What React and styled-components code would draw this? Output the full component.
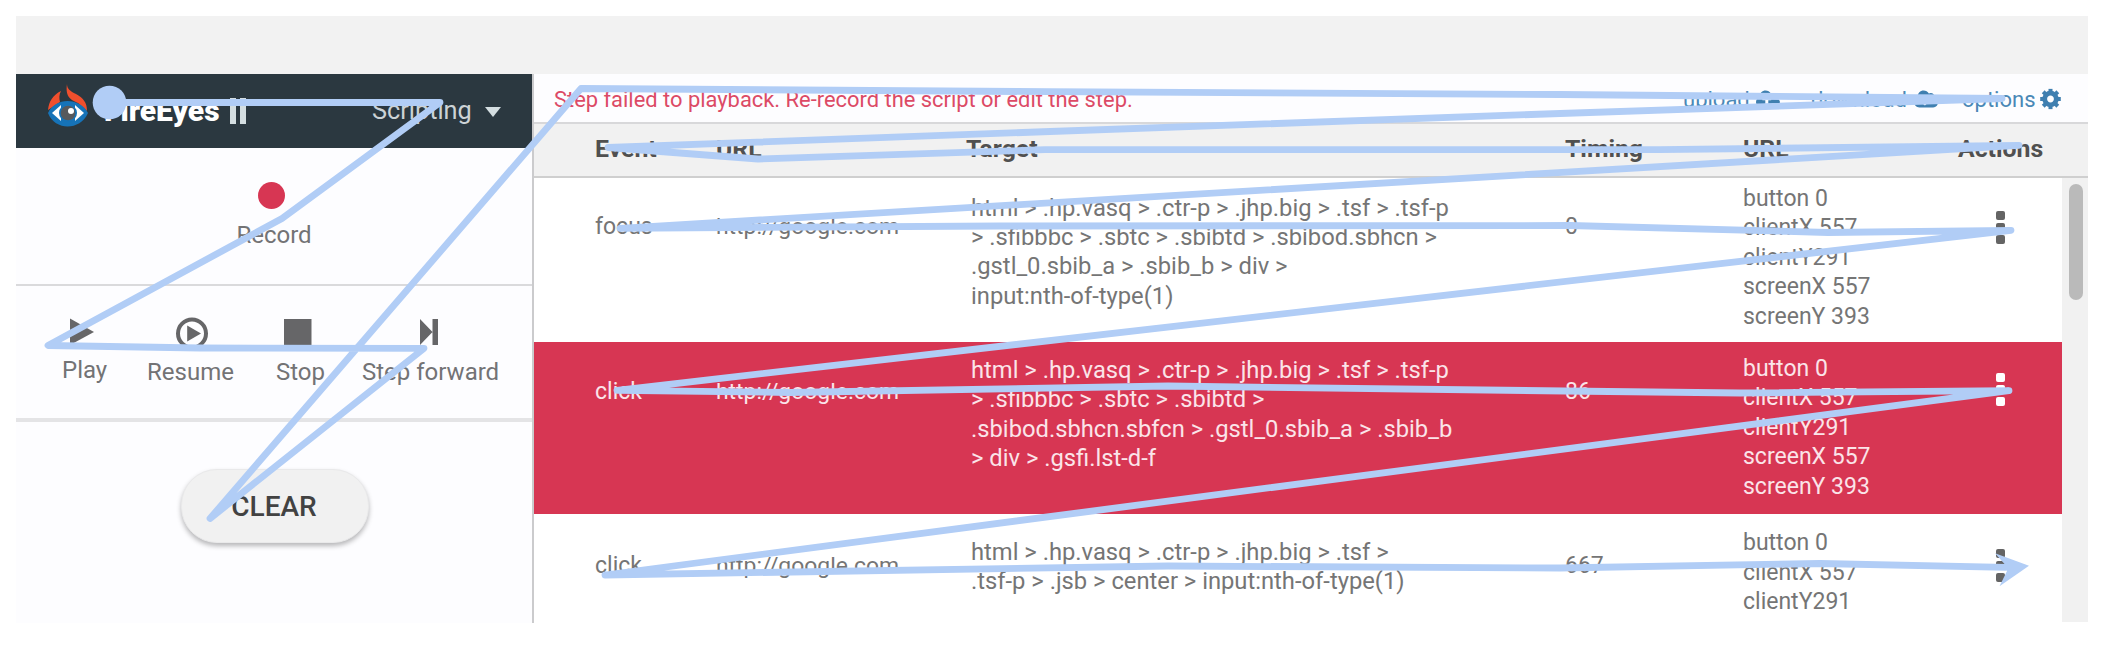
import React from "react";
import styled, { createGlobalStyle } from "styled-components";
import { FaCloudUploadAlt, FaCloudDownloadAlt } from "react-icons/fa";

const GlobalStyle = createGlobalStyle`
  * { box-sizing: border-box; }
  body { margin: 0; background: #fff; font-family: Roboto, "Liberation Sans", sans-serif; }
`;

const Page = styled.main`
  position: relative;
  width: 2106px;
  height: 646px;
  padding: 16px 18px 24px 16px;
  background: #fff;
  overflow: hidden;
`;
const Band = styled.div`
  height: 58px;
  background: #f2f2f2;
`;
const Body = styled.div`
  display: flex;
  height: 549px;
`;
const Sidebar = styled.aside`
  width: 518px;
  border-right: 2px solid #cbcbcd;
  background: #fdfdff;
`;
const Brand = styled.header`
  display: flex;
  align-items: flex-start;
  height: 74px;
  width: 516px;
  padding-left: 31px;
  background: #2b3840;
`;
const Logo = styled.svg`
  width: 42px;
  height: 44px;
  margin-top: 9px;
`;
const Name = styled.div`
  width: 126px;
  margin: 19px 0 0 15px;
  font: 900 30px/36px Roboto, sans-serif;
  color: #fff;
  white-space: nowrap;
`;
const Numeral = styled.div`
  display: flex;
  gap: 4px;
  margin-top: 24px;
  width: 16px;
  height: 26px;
  i { width: 6px; background: #d4dee1; }
`;
const Mode = styled.div`
  display: flex;
  align-items: center;
  gap: 13px;
  margin: 22px 0 0 126px;
  font-size: 25.3px;
  line-height: 30px;
  color: #ccd3d6;
`;
const Caret = styled.i`
  margin-top: 2px;
  border: 8px solid transparent;
  border-top: 10px solid #d4dee1;
  border-bottom: 0;
`;
const RecordPanel = styled.section`
  display: flex;
  flex-direction: column;
  align-items: center;
  height: 138px;
  padding-top: 34px;
  border-bottom: 2px solid #dadadc;
`;
const Dot = styled.i`
  width: 27px;
  height: 27px;
  margin-right: 5px;
  border-radius: 50%;
  background: #d73653;
`;
const Label = styled.span`
  font-size: 24px;
  line-height: 30px;
  color: #737375;
  white-space: nowrap;
`;
const RecordLabel = styled(Label)`
  margin-top: 11px;
`;
const Controls = styled.section`
  display: flex;
  height: 136px;
  padding: 31px 0 0 46px;
  border-bottom: 4px solid #e4e4e6;
`;
const Control = styled.div`
  width: ${(p) => p.$width}px;
  margin-left: ${(p) => p.$gap || 0}px;
  svg { display: block; height: 33px; margin-left: ${(p) => p.$icon}px; overflow: visible; }
  span { display: block; margin-top: ${(p) => p.$drop}px; }
`;
const ClearButton = styled.button`
  display: block;
  width: 188px;
  height: 74px;
  padding: 1px 2px 0 0;
  margin: 47px 0 0 165px;
  border: 1px solid #e9e9ea;
  border-radius: 36px;
  background: #f1f1f1;
  box-shadow: 0 3px 5px rgba(0, 0, 0, 0.28);
  font: 500 28px/30px Roboto, sans-serif;
  color: #424242;
`;
const Main = styled.section`
  flex: 1;
`;
const TopBar = styled.div`
  display: flex;
  justify-content: space-between;
  height: 50px;
  padding: 11px 27px 0 20px;
  border-bottom: 2px solid #d8d8da;
  background: #fdfdff;
  font-size: 22px;
  line-height: 29px;
`;
const ErrorText = styled.span`
  color: #dc4a66;
  font-size: 21.9px;
  line-height: 30px;
`;
const Links = styled.nav`
  display: flex;
`;
const ToolLink = styled.a`
  display: flex;
  width: ${(p) => p.$width}px;
  justify-content: space-between;
  margin-left: ${(p) => p.$gap || 0}px;
  color: #4a88b6;
  svg { color: #3f7fb0; margin-top: 2px; }
`;
const GearIcon = styled.svg`
  width: 21px;
  height: 21px;
  transform: translateY(1.5px);
`;
const TableHead = styled.div`
  display: grid;
  grid-template-columns: 121px 250px 599px 178px 215px 1fr;
  height: 54px;
  padding: 10px 0 0 61px;
  border-bottom: 2px solid #cfcfcf;
  background: #f1f1f1;
  font-size: 24.8px;
  font-weight: 700;
  line-height: 30px;
  color: #505050;
`;
const Scroll = styled.div`
  display: flex;
  height: 444px;
`;
const Rows = styled.div`
  width: 1528px;
`;
const Row = styled.div`
  display: grid;
  grid-template-columns: 121px 255px 594px 178px 253px 1fr;
  align-items: start;
  height: ${(p) => p.$height}px;
  padding-left: 61px;
  background: ${(p) => (p.$failed ? "#d73653" : "#fff")};
  color: ${(p) => (p.$failed ? "#fbe4e9" : "#757575")};
`;
const Cell = styled.div`
  padding-top: ${(p) => p.$top}px;
  font-size: ${(p) => p.$size || 23}px;
  line-height: ${(p) => p.$line || 29.5}px;
  white-space: nowrap;
`;
const Menu = styled.div`
  display: flex;
  flex-direction: column;
  gap: 3px;
  padding-top: ${(p) => p.$top}px;
  i { width: 9px; height: 9px; border-radius: 2px; background: ${(p) => (p.$failed ? "#fff" : "#646464")}; }
`;
const Track = styled.div`
  width: 26px;
  padding: 6px 5px 0 7px;
  background: #f1f1f1;
`;
const Thumb = styled.div`
  height: 116px;
  border-radius: 7px;
  background: #bababa;
`;
const Overlay = styled.svg`
  position: absolute;
  inset: 0;
  width: 2106px;
  height: 646px;
`;

const rows = [
  {
    event: "focus", timing: "0", height: 164, tops: [33.6, 15.7, 5.7, 32.5],
    target: ["html > .hp.vasq > .ctr-p > .jhp.big > .tsf > .tsf-p", "> .sfibbbc > .sbtc > .sbibtd > .sbibod.sbhcn >", ".gstl_0.sbib_a > .sbib_b > div >", "input:nth-of-type(1)"],
    details: ["button 0", "clientX 557", "clientY291", "screenX 557", "screenY 393"],
  },
  {
    event: "click", timing: "86", height: 172, failed: true, tops: [35, 14, 11.9, 30.7],
    target: ["html > .hp.vasq > .ctr-p > .jhp.big > .tsf > .tsf-p", "> .sfibbbc > .sbtc > .sbibtd >", ".sbibod.sbhcn.sbfcn > .gstl_0.sbib_a > .sbib_b", "> div > .gsfi.lst-d-f"],
    details: ["button 0", "clientX 557", "clientY291", "screenX 557", "screenY 393"],
  },
  {
    event: "click", timing: "667", height: 108, tops: [36.8, 24.2, 14.2, 34.5],
    target: ["html > .hp.vasq > .ctr-p > .jhp.big > .tsf >", ".tsf-p > .jsb > center > input:nth-of-type(1)"],
    details: ["button 0", "clientX 557", "clientY291"],
  },
];

const readingPath =
  "109,102.5 440,102.5 282,218.5 48,345.5 200,348 424,348.3 210,518.5 581,88.5 1050,91.7 1560,94.5 2002,98.5 1560,113.5 1050,131.5 608,147.5 758,159 1045,149.7 1660,149.7 2019,145.3 620,228.3 1000,226 1570,225.5 1828,232.5 2011,230.3 617,390.3 790,392.5 1168,386 1565,391 1740,393 2009,390.7 605,575 1168,566 1560,568 1820,563.5 2006,567.3";

function Gear() {
  return (
    <GearIcon viewBox="-10.5 -10.5 21 21" fill="none" stroke="currentColor">
      <circle r="5.8" strokeWidth="4.8" />
      {[0, 45, 90, 135, 180, 225, 270, 315].map((angle) => (
        <path key={angle} d="M0-7V-10.3" strokeWidth="4" transform={`rotate(${angle})`} />
      ))}
    </GearIcon>
  );
}

export default function App() {
  return (
    <Page>
      <GlobalStyle />
      <Band />
      <Body>
        <Sidebar>
          <Brand>
            <Logo viewBox="0 0 42 44">
              <path d="M1 27C2 18 6 12 14 8c-2 4-2 7-1 11L4 25ZM20 1c0 5 3 7 9 10 7 4 11 8 11 17L31 20C24 17 18 14 20 1Z" fill="#f04f2d" />
              <path d="M1 30C8 14 33 14 41 30 33 48 8 48 1 30Z" fill="#1673b8" />
              <path d="M5 30 14 22v16ZM37 30 28 22v16Z" fill="#fff" />
              <circle cx="21" cy="30" r="9" fill="#1673b8" />
              <circle cx="21" cy="30" r="7.3" fill="#57595d" />
              <circle cx="24" cy="28" r="3" fill="#fff" />
            </Logo>
            <Name>FireEyes</Name>
            <Numeral><i /><i /></Numeral>
            <Mode>Scripting<Caret /></Mode>
          </Brand>
          <RecordPanel>
            <Dot />
            <RecordLabel>Record</RecordLabel>
          </RecordPanel>
          <Controls>
            <Control $width={44} $icon={8} $drop={5}>
              <svg width="24" viewBox="0 0 24 33"><path d="M0 1.5 24 15 0 28Z" fill="#666668" /></svg>
              <Label>Play</Label>
            </Control>
            <Control $width={88} $gap={41} $icon={29} $drop={7}>
              <svg width="33" viewBox="0 0 33 33"><circle cx="16" cy="16.5" r="14" fill="none" stroke="#666668" strokeWidth="4" /><path d="M11.2 8.5 25 16.5 11.2 24.5Z" fill="#666668" /></svg>
              <Label>Resume</Label>
            </Control>
            <Control $width={50} $gap={41} $icon={8} $drop={7}>
              <svg width="28" viewBox="0 0 28 33"><path d="M0 2h27.5v26H0Z" fill="#666668" /></svg>
              <Label>Stop</Label>
            </Control>
            <Control $width={137} $gap={36} $icon={58} $drop={7}>
              <svg width="18" viewBox="0 0 18 33"><path d="M0 2 12.5 15 0 28ZM12.5 2H18v26h-5.5Z" fill="#666668" /></svg>
              <Label>Step forward</Label>
            </Control>
          </Controls>
          <ClearButton>CLEAR</ClearButton>
        </Sidebar>
        <Main>
          <TopBar>
            <ErrorText>Step failed to playback. Re-record the script or edit the step.</ErrorText>
            <Links>
              <ToolLink $width={97}>upload<FaCloudUploadAlt size={24} /></ToolLink>
              <ToolLink $width={127} $gap={31}>download<FaCloudDownloadAlt size={24} /></ToolLink>
              <ToolLink $width={99} $gap={24}>options<Gear /></ToolLink>
            </Links>
          </TopBar>
          <TableHead>
            <span>Event</span><span>URL</span><span>Target</span><span>Timing</span><span>URL</span><span>Actions</span>
          </TableHead>
          <Scroll>
            <Rows>
              {rows.map((r) => (
                <Row key={r.timing} $height={r.height} $failed={r.failed}>
                  <Cell $top={r.tops[0]}>{r.event}</Cell>
                  <Cell $top={r.tops[0]} $size={22.9}>http://google.com</Cell>
                  <Cell $top={r.tops[1]} $size={23.75} $line={29.3}>{r.target.map((t) => <div key={t}>{t}</div>)}</Cell>
                  <Cell $top={r.tops[0]}>{r.timing}</Cell>
                  <Cell $top={r.tops[2]}>{r.details.map((t) => <div key={t}>{t}</div>)}</Cell>
                  <Menu $top={r.tops[3]} $failed={r.failed}><i /><i /><i /></Menu>
                </Row>
              ))}
            </Rows>
            <Track><Thumb /></Track>
          </Scroll>
        </Main>
      </Body>
      <Overlay viewBox="0 0 2106 646">
        <polyline points={readingPath} fill="none" stroke="#b1cdf6" strokeWidth="6.8" strokeLinecap="round" strokeLinejoin="round" />
        <circle cx="109.5" cy="102.5" r="16.8" fill="#b1cdf6" />
        <path d="M2029 565.7 1995 553.3 2005 564.5 2007 571 1999.5 586.3Z" fill="#b1cdf6" />
      </Overlay>
    </Page>
  );
}
